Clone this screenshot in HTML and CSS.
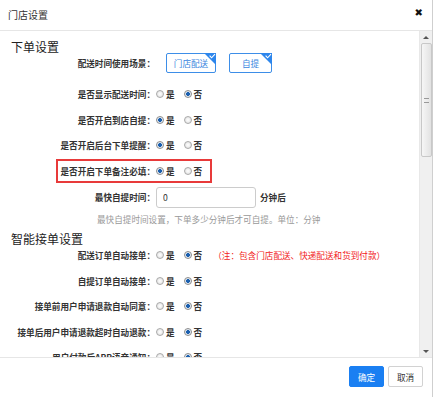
FILE: index.html
```html
<!DOCTYPE html>
<html lang="zh-CN">

<head>
    <meta charset="UTF-8">
    <meta name="viewport" content="width=device-width, initial-scale=1.0">
    <title>门店设置</title>
    <link rel="stylesheet" href="styles.css">
</head>

<body>
    <div class="dialog">
        <div class="dlg-head">
            <span class="dlg-title">门店设置</span>
            <span class="dlg-close">✖</span>
        </div>
        <div class="dlg-body">
            <div class="dlg-content">
                <h3 class="section">下单设置</h3>
                <div class="row">
                    <label class="lbl">配送时间使用场景：</label>
                    <span class="tag tag-first">门店配送
                        <svg class="tag-corner" width="12" height="12" viewBox="0 0 12 12"><polygon points="0,0 12,0 12,12" fill="#2d86ec"/><path d="M5.6 2.6 L7.6 4.8 L11 1.2" stroke="#fff" stroke-width="1.1" fill="none"/></svg>
                    </span>
                    <span class="tag">自提
                        <svg class="tag-corner" width="12" height="12" viewBox="0 0 12 12"><polygon points="0,0 12,0 12,12" fill="#2d86ec"/><path d="M5.6 2.6 L7.6 4.8 L11 1.2" stroke="#fff" stroke-width="1.1" fill="none"/></svg>
                    </span>
                </div>
                <div class="row row-first">
                    <label class="lbl">是否显示配送时间：</label>
                    <span class="radio"></span><span class="opt">是</span>
                    <span class="radio checked"></span><span class="opt">否</span>
                </div>
                <div class="row">
                    <label class="lbl">是否开启到店自提：</label>
                    <span class="radio checked"></span><span class="opt">是</span>
                    <span class="radio"></span><span class="opt">否</span>
                </div>
                <div class="row">
                    <label class="lbl">是否开启后台下单提醒：</label>
                    <span class="radio checked"></span><span class="opt">是</span>
                    <span class="radio"></span><span class="opt">否</span>
                </div>
                <div class="row marked">
                    <span class="mark"></span>
                    <label class="lbl">是否开启下单备注必填：</label>
                    <span class="radio checked"></span><span class="opt">是</span>
                    <span class="radio"></span><span class="opt">否</span>
                </div>
                <div class="row row-input">
                    <label class="lbl">最快自提时间：</label>
                    <input class="num" type="text" value="0">
                    <span class="unit">分钟后</span>
                </div>
                <p class="help">最快自提时间设置，下单多少分钟后才可自提。单位：分钟</p>

                <h3 class="section section-2">智能接单设置</h3>
                <div class="row row-top">
                    <label class="lbl">配送订单自动接单：</label>
                    <span class="radio"></span><span class="opt">是</span>
                    <span class="radio checked"></span><span class="opt">否</span>
                    <span class="note">（注：包含门店配送、快递配送和货到付款）</span>
                </div>
                <div class="row">
                    <label class="lbl">自提订单自动接单：</label>
                    <span class="radio"></span><span class="opt">是</span>
                    <span class="radio checked"></span><span class="opt">否</span>
                </div>
                <div class="row">
                    <label class="lbl">接单前用户申请退款自动同意：</label>
                    <span class="radio"></span><span class="opt">是</span>
                    <span class="radio checked"></span><span class="opt">否</span>
                </div>
                <div class="row">
                    <label class="lbl">接单后用户申请退款超时自动退款：</label>
                    <span class="radio"></span><span class="opt">是</span>
                    <span class="radio checked"></span><span class="opt">否</span>
                </div>
                <div class="row row-last">
                    <label class="lbl">用户付款后APP语音通知：</label>
                    <span class="radio"></span><span class="opt">是</span>
                    <span class="radio checked"></span><span class="opt">否</span>
                </div>
            </div>
            <div class="scrollbar">
                <div class="sb-btn"><span class="arrow-up"></span></div>
                <div class="sb-track">
                    <div class="sb-thumb"><span class="grip"></span></div>
                </div>
                <div class="sb-btn"><span class="arrow-down"></span></div>
            </div>
        </div>
        <div class="dlg-foot">
            <button class="btn btn-primary">确定</button>
            <button class="btn">取消</button>
        </div>
    </div>
</body>
</html>
```

FILE: styles.css
```css
* {
    box-sizing: border-box;
}

body {
    margin: 0;
    background: #fff;
    font-family: "Noto Sans CJK SC", "Liberation Sans", sans-serif;
    color: #333;
}

.dialog {
    width: 433px;
    height: 397px;
    border-right: 1px solid #cfcfcf;
    display: flex;
    flex-direction: column;
    background: #fff;
}

.dlg-head {
    height: 31px;
    border-bottom: 1px solid #e6e6e6;
    display: flex;
    align-items: center;
    justify-content: space-between;
    padding: 0 9px 1px 8px;
}

.dlg-title {
    font-size: 10px;
    color: #333;
}

.dlg-close {
    font-family: "DejaVu Sans", sans-serif;
    font-size: 10px;
    font-weight: bold;
    color: #111;
    line-height: 1;
    margin-top: -4px;
}

.dlg-body {
    height: 326px;
    display: flex;
    overflow: hidden;
}

.dlg-content {
    flex: 1;
    padding-top: 9px;
    overflow: hidden;
}

.section {
    margin: 0 0 0 11px;
    font-size: 12px;
    line-height: 13px;
    font-weight: normal;
    color: #222;
}

.section-2 {
    margin-top: 6px;
    line-height: 12px;
}

.row {
    position: relative;
    height: 20px;
    display: flex;
    align-items: center;
    margin-top: 5.6px;
    font-size: 8.6px;
    white-space: nowrap;
}

.row:first-of-type,
.row-top {
    margin-top: 0;
}

.row-first {
    margin-top: 11px;
}

.lbl {
    width: 155px;
    flex: none;
    text-align: right;
    font-weight: bold;
    color: #333;
}

.tag {
    position: relative;
    height: 20px;
    width: 43px;
    margin-left: 13px;
    border: 1px solid #3d8ee8;
    border-radius: 2px;
    color: #3a86e0;
    display: flex;
    align-items: center;
    justify-content: center;
    font-size: 8.6px;
}

.tag-first {
    width: 50px;
    margin-left: 11px;
}

.tag-corner {
    position: absolute;
    top: -1px;
    right: -1px;
}

.radio {
    width: 8px;
    height: 8px;
    border-radius: 50%;
    border: 1px solid #a9a9a9;
    background: radial-gradient(circle, #ffffff 0, #dcdcdc 100%);
    margin-left: 1px;
    flex: none;
}

.radio + .opt + .radio {
    margin-left: 9px;
}

.radio.checked {
    border-color: #8c8c8c;
    background: radial-gradient(circle, #1b5fae 0, #1b5fae 1.6px, #dfe8f2 2.2px, #f4f6f8 100%);
}

.opt {
    margin-left: 2px;
    font-weight: bold;
    color: #333;
}

.marked .mark {
    position: absolute;
    left: 56px;
    top: -2px;
    width: 156px;
    height: 24px;
    border: 2px solid #e83a3a;
}

.row-input {
    height: 21px;
    margin-top: 6.2px;
}

.num {
    width: 100px;
    height: 21px;
    margin: 0 0 0 1px;
    border: 1px solid #ccc;
    border-radius: 3px;
    padding: 0 0 0 6px;
    font-family: inherit;
    font-size: 8.6px;
    color: #333;
}

.unit {
    margin-left: 4px;
    font-weight: bold;
}

.help {
    margin: 3px 0 0 97px;
    font-size: 8.6px;
    line-height: 16px;
    color: #999;
}

.note {
    margin-left: 11px;
    color: #f21b1b;
}

.scrollbar {
    width: 13px;
    flex: none;
    display: flex;
    flex-direction: column;
    background: #f0f0f0;
    border-left: 1px solid #e8e8e8;
}

.sb-btn {
    height: 12px;
    display: flex;
    align-items: center;
    justify-content: center;
}

.arrow-up {
    border-left: 3px solid transparent;
    border-right: 3px solid transparent;
    border-bottom: 3px solid #555;
}

.arrow-down {
    border-left: 3px solid transparent;
    border-right: 3px solid transparent;
    border-top: 3px solid #555;
}

.sb-track {
    flex: 1;
}

.sb-thumb {
    height: 114px;
    margin: 0 0 0 1px;
    border: 1px solid #c8c8c8;
    border-radius: 2px;
    background: linear-gradient(to right, #f6f6f6, #e2e2e2);
    display: flex;
    align-items: center;
    justify-content: center;
}

.grip {
    width: 5px;
    height: 5px;
    border-top: 1px solid #999;
    border-bottom: 1px solid #999;
}

.dlg-foot {
    flex: 1;
    border-top: 1px solid #e6e6e6;
    display: flex;
    justify-content: flex-end;
    align-items: flex-start;
    gap: 4px;
    padding: 8px 9px 0 0;
}

.btn {
    width: 35px;
    height: 21px;
    border: 1px solid #d2d2d2;
    border-radius: 2px;
    background: #fff;
    color: #333;
    font-family: inherit;
    font-size: 8.6px;
    padding: 0;
}

.btn-primary {
    background: #1a7ff2;
    border-color: #1a7ff2;
    color: #fff;
}
```
